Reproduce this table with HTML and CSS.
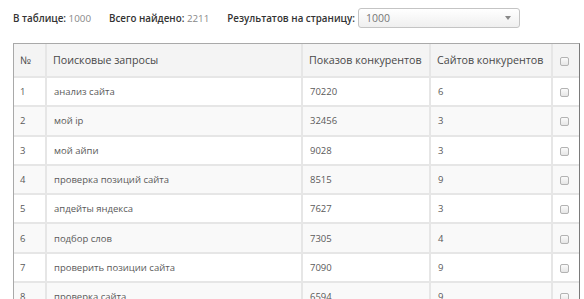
FILE: index.html
```html
<!DOCTYPE html>
<html lang="ru">
<head>
<meta charset="utf-8">
<link rel="stylesheet" href="styles.css">
</head>
<body>
<div class="page">
  <div class="toolbar">
    <span class="stat"><b>В таблице:</b> 1000</span>
    <span class="stat"><b>Всего найдено:</b> 2211</span>
    <span class="stat per"><b>Результатов на страницу:</b>
      <span class="select"><span class="sel-val">1000</span><span class="arrow"></span></span>
    </span>
  </div>
  <div class="table-wrap">
    <table class="grid">
      <colgroup>
        <col class="c-num"><col class="c-query"><col class="c-shows"><col class="c-sites"><col class="c-check">
      </colgroup>
      <thead>
        <tr><th>№</th><th>Поисковые запросы</th><th>Показов конкурентов</th><th>Сайтов конкурентов</th><th class="chk"><span class="box"></span></th></tr>
      </thead>
      <tbody>
        <tr><td>1</td><td>анализ сайта</td><td>70220</td><td>6</td><td class="chk"><span class="box"></span></td></tr>
        <tr><td>2</td><td>мой ip</td><td>32456</td><td>3</td><td class="chk"><span class="box"></span></td></tr>
        <tr><td>3</td><td>мой айпи</td><td>9028</td><td>3</td><td class="chk"><span class="box"></span></td></tr>
        <tr><td>4</td><td>проверка позиций сайта</td><td>8515</td><td>9</td><td class="chk"><span class="box"></span></td></tr>
        <tr><td>5</td><td>апдейты яндекса</td><td>7627</td><td>3</td><td class="chk"><span class="box"></span></td></tr>
        <tr><td>6</td><td>подбор слов</td><td>7305</td><td>4</td><td class="chk"><span class="box"></span></td></tr>
        <tr><td>7</td><td>проверить позиции сайта</td><td>7090</td><td>9</td><td class="chk"><span class="box"></span></td></tr>
        <tr><td>8</td><td>проверка сайта</td><td>6594</td><td>9</td><td class="chk"><span class="box"></span></td></tr>
      </tbody>
    </table>
  </div>
</div>
</body>
</html>
```
FILE: styles.css
```css
html, body {
  margin: 0;
  padding: 0;
  background: #fff;
  overflow: hidden;
}
.page {
  width: 567px;
  padding: 8px 0 0 13px;
  font-family: "Open Sans", "Liberation Sans", sans-serif;
  color: #555;
}
.toolbar {
  display: flex;
  align-items: center;
  height: 20px;
  font-size: 9.8px;
  color: #888;
  gap: 18px;
}
.stat b {
  font-weight: 600;
  color: #333;
}
.per {
  display: flex;
  align-items: center;
  gap: 3px;
}
.select {
  position: relative;
  display: flex;
  align-items: center;
  box-sizing: border-box;
  width: 162px;
  height: 20px;
  border: 1px solid #c4c4c4;
  border-radius: 3px;
  background: linear-gradient(#ffffff, #efefef);
  padding-left: 7px;
  color: #777;
  font-size: 10.5px;
}
.arrow {
  position: absolute;
  right: 8px;
  top: 7px;
  width: 0;
  height: 0;
  border-left: 3px solid transparent;
  border-right: 3px solid transparent;
  border-top: 4px solid #888;
}
.table-wrap {
  margin-top: 15px;
  border: 1px solid #a9a9a9;
  border-right-color: #7a7a7a;
  border-bottom: none;
}
.grid {
  width: 100%;
  border-collapse: collapse;
  table-layout: fixed;
}
.c-num { width: 32px; }
.c-query { width: 256px; }
.c-shows { width: 128px; }
.c-sites { width: 122px; }
.grid th, .grid td {
  border: 2px solid #e6e6e6;
  text-align: left;
  padding: 0 0 0 7px;
  white-space: nowrap;
  overflow: hidden;
}
.grid tr > :first-child { border-left: none; padding-left: 6px; }
.grid tr > :last-child { border-right: none; }
.grid thead tr:first-child th { border-top: none; }
.grid th {
  height: 32px;
  background: #f4f4f4;
  font-weight: 400;
  font-size: 10.7px;
  color: #484848;
  padding-left: 6px;
}
.grid td {
  height: 27.3px;
  font-size: 9.5px;
  color: #5a5a5a;
}
.grid tbody tr:nth-child(even) td {
  background: #f9f9f9;
}
.grid .chk {
  padding: 0;
  text-align: center;
}
.box {
  display: inline-block;
  box-sizing: border-box;
  width: 9px;
  height: 9px;
  border: 1px solid #b3b3b3;
  border-radius: 2px;
  background: linear-gradient(#fbfbfb, #e6e6e6);
  vertical-align: middle;
  margin-right: 3px;
}
```
